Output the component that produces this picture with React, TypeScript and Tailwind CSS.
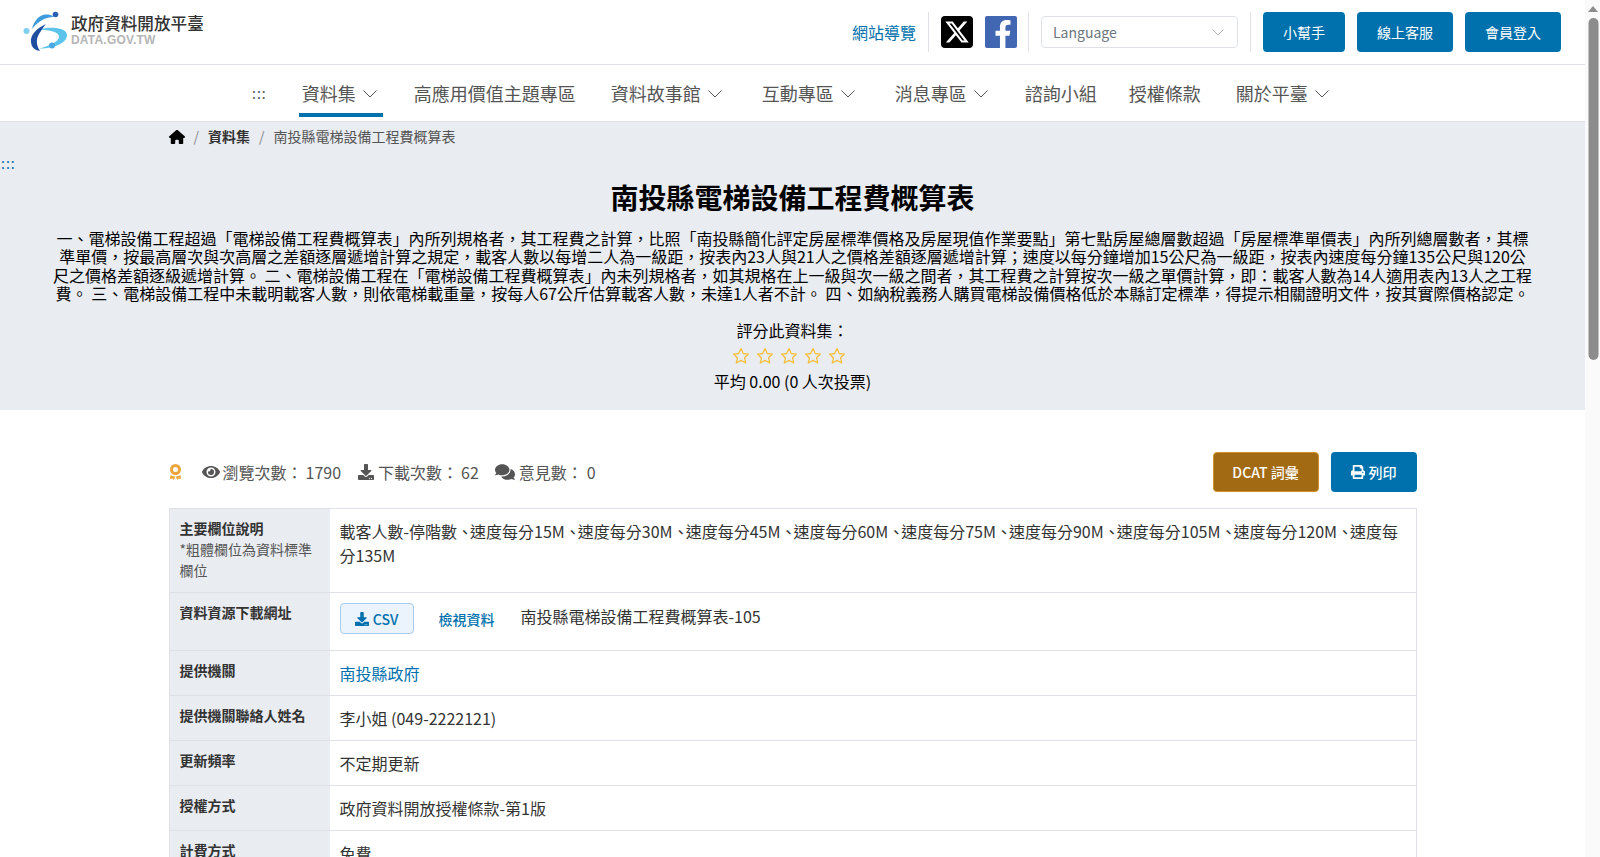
import React from "react";
import { FaEye, FaDownload, FaComments, FaPrint, FaFacebookF } from "react-icons/fa";
import { FaXTwitter, FaHouse } from "react-icons/fa6";

const Chevron = () => (
  <svg width="14" height="8" viewBox="0 0 14 8" fill="none" stroke="#555" strokeWidth="1" className="ml-[7px] mr-[1px]">
    <path d="M0.5 0.5L7 7L13.5 0.5" />
  </svg>
);

const Logo = () => (
  <svg width="44" height="40" viewBox="0 0 44 40" className="shrink-0 overflow-visible">
    <path d="M15 17.500C27 14 43 16 43 23C43 32 27 37 15 36.500C24 34.500 35 30 35 24.500C35 20 26 18 15 17.500z" fill="#5cc3ea" />
    <path d="M22 12C13 16 6 23 7 30C7.500 35 10 38 16 39C12 33 12 27 15 22C17 19 19 15.500 22 12z" fill="#1f4ea1" />
    <path d="M8 17C10 9 15 2.500 22 2.500C25 2.500 28 3 30 5C24 4.500 15 8 8 17z" fill="#3b9bdc" />
    <circle cx="31.500" cy="2.500" r="2.800" fill="#2a5fb4" />
    <circle cx="2.500" cy="19" r="3" fill="#7fd0ef" />
    <circle cx="28" cy="33.500" r="3" fill="#4aa8e0" />
  </svg>
);

const Row = ({ label, children }: { label: React.ReactNode; children: React.ReactNode }) => (
  <div className="flex border-t border-[#dee2e6] first:border-t-0">
    <div className="w-[160px] shrink-0 bg-[#e9ecf1] px-[10px] pt-[9px] pb-[11px] text-[14px] leading-[21px] text-[#333]">{label}</div>
    <div className="flex-1 p-[10px] text-[16px] leading-[24px] text-[#333]">{children}</div>
  </div>
);

const NavItem = ({ text, chevron, active, cls }: { text: string; chevron?: boolean; active?: boolean; cls: string }) => (
  <div className={`relative flex h-[56px] items-center pt-[1px] text-[18px] text-[#555] ${cls}`}>
    {text}
    {chevron && <Chevron />}
    {active && <span className="absolute bottom-[4px] left-[-3px] right-[-5px] h-[4px] bg-[#0071ad]" />}
  </div>
);

const Divider = ({ cls = "mx-[12px]" }: { cls?: string }) => <span className={`h-[40px] w-px bg-[#dee2e6] ${cls}`} />;

const Scrollbar = () => (
  <div className="flex h-full w-[15px] shrink-0 flex-col items-center bg-[#fafafa]">
    <svg width="10" height="6" viewBox="0 0 10 6" className="mt-[6px]"><path d="M5 0L10 6H0z" fill="#8c8c8c" /></svg>
    <div className="mt-[6px] h-[342px] w-[10px] translate-x-[0.5px] rounded-[5px] bg-[#8c8c8c]" />
  </div>
);

const fields = ["載客人數-停階數", "速度每分15M", "速度每分30M", "速度每分45M", "速度每分60M", "速度每分75M", "速度每分90M", "速度每分105M", "速度每分120M", "速度每分135M"];

export default function App() {
  return (
    <div
      className="flex h-screen overflow-hidden bg-white text-[#333]"
      style={{ fontFamily: '"Noto Sans CJK TC", "Noto Sans", sans-serif' }}
    >
      <div className="min-w-0 flex-1 overflow-hidden">
        <header className="flex h-[65px] items-center justify-between border-b border-[#dee2e6] pl-[24px] pr-[24px]">
          <div className="flex items-center">
            <Logo />
            <div className="mb-[4px] ml-[3px] flex flex-col">
              <span className="text-[16.6px] leading-[20px] font-medium text-[#333]">政府資料開放平臺</span>
              <span className="text-[12px] leading-[14px] font-bold tracking-[0.2px] text-[#b5b5b5]" style={{ fontFamily: '"Liberation Sans", sans-serif' }}>DATA.GOV.TW</span>
            </div>
          </div>
          <div className="flex h-[40px] items-center">
            <a className="text-[16px] text-[#0071ad]">網站導覽</a>
            <Divider />
            <span className="flex h-[32px] w-[32px] items-center justify-center rounded-[4px] bg-black text-white"><FaXTwitter size={26} /></span>
            <span className="ml-[12px] flex h-[32px] w-[32px] items-end justify-center overflow-hidden rounded-[2px] bg-[#4267b2] text-white"><FaFacebookF size={28} className="translate-x-[2px]" /></span>
            <Divider cls="ml-[11px] mr-[12px]" />
            <div className="flex h-[32px] w-[197px] items-center justify-between rounded-[4px] border border-[#dee2e6] pl-[11px] pr-[13px] text-[14px] text-[#6c757d]">
              Language
              <svg width="12" height="7" viewBox="0 0 12 7" fill="none" stroke="#bbb" strokeWidth="1"><path d="M0.5 0.5L6 6L11.5 0.5" /></svg>
            </div>
            <Divider />
            <button className="h-[40px] w-[82px] rounded-[4px] bg-[#0071ad] text-[14px] text-white">小幫手</button>
            <button className="ml-[12px] h-[40px] w-[96px] rounded-[4px] bg-[#0071ad] text-[14px] text-white">線上客服</button>
            <button className="ml-[12px] h-[40px] w-[96px] rounded-[4px] bg-[#0071ad] text-[14px] text-white">會員登入</button>
          </div>
        </header>

        <nav className="flex h-[57px] items-center border-b border-[#dee2e6] pl-[252px]">
          <span className="mr-[35px] text-[14px] tracking-[1px] text-[#555]">:::</span>
          <NavItem text="資料集" chevron active cls="mr-[36px]" />
          <NavItem text="高應用價值主題專區" cls="mr-[35px]" />
          <NavItem text="資料故事館" chevron cls="mr-[39px]" />
          <NavItem text="互動專區" chevron cls="mr-[39px]" />
          <NavItem text="消息專區" chevron cls="mr-[36px]" />
          <NavItem text="諮詢小組" cls="mr-[32px]" />
          <NavItem text="授權條款" cls="mr-[35px]" />
          <NavItem text="關於平臺" chevron cls="" />
        </nav>

        <section className="h-[288px] bg-[#e9ecf1]">
          <div className="mx-auto flex h-[29px] w-[1248px] items-center text-[14px]">
            <FaHouse size={16} className="text-black" />
            <span className="mx-[9px] text-[#888]">/</span>
            <span className="font-bold text-[#333]">資料集</span>
            <span className="mx-[9px] text-[#888]">/</span>
            <span className="text-[#555]">南投縣電梯設備工程費概算表</span>
          </div>
          <div className="mt-[5px] pl-[1px] text-[14px] leading-[14px] tracking-[1px] text-[#0071ad]">:::</div>
          <h1 className="mt-[8px] text-center text-[28px] leading-[38px] font-bold text-black">南投縣電梯設備工程費概算表</h1>
          <p className="mx-auto mt-[13px] w-[1480px] text-center text-[16px] leading-[18.4px] text-black">
            一、電梯設備工程超過「電梯設備工程費概算表」內所列規格者，其工程費之計算，比照「南投縣簡化評定房屋標準價格及房屋現值作業要點」第七點房屋總層數超過「房屋標準單價表」內所列總層數者，其標準單價，按最高層次與次高層之差額逐層遞增計算之規定，載客人數以每增二人為一級距，按表內23人與21人之價格差額逐層遞增計算；速度以每分鐘增加15公尺為一級距，按表內速度每分鐘135公尺與120公尺之價格差額逐級遞增計算。 二、電梯設備工程在「電梯設備工程費概算表」內未列規格者，如其規格在上一級與次一級之間者，其工程費之計算按次一級之單價計算，即：載客人數為14人適用表內13人之工程費。 三、電梯設備工程中未載明載客人數，則依電梯載重量，按每人67公斤估算載客人數，未達1人者不計。 四、如納稅義務人購買電梯設備價格低於本縣訂定標準，得提示相關證明文件，按其實際價格認定。
          </p>
          <div className="mt-[15px] text-center text-[16px] leading-[24px] text-black">評分此資料集：</div>
          <div className="flex justify-center gap-[6px] pr-[8px] pt-[5px]">
            {[0, 1, 2, 3, 4].map((i) => (
              <svg key={i} width="18" height="18" viewBox="0 0 18 18" fill="none" stroke="#f6bf3f" strokeWidth="1.300">
                <path d="M9 1.500l2.300 5 5.200.600-3.900 3.600 1.100 5.300L9 13.400l-4.700 2.600 1.100-5.300-3.900-3.600 5.200-.600z" strokeLinejoin="round" />
              </svg>
            ))}
          </div>
          <div className="mt-[4px] text-center text-[16px] leading-[24px] text-black">平均 0.00 (0 人次投票)</div>
        </section>

        <main className="mx-auto w-[1248px]">
          <div className="flex items-center justify-between pt-[42px] pb-[16px] text-[16px] text-[#555]">
            <div className="flex items-center">
              <svg width="13" height="17" viewBox="0 0 13 17" fill="#eda43b">
                <path fillRule="evenodd" d="M6.500 0a5.500 5.500 0 110 11 5.500 5.500 0 010-11zm0 3a2.500 2.500 0 100 5 2.500 2.500 0 000-5z" />
                <path d="M1.500 11l2.500 1.300 2.500.200L4.500 16l-1-1.500-2.500.5zM11.500 11L9 12.300l-2.500.200L8.500 16l1-1.500 2.500.5z" />
              </svg>
              <FaEye size={18} className="ml-[20px] text-[#555]" />
              <span className="ml-[3px]">瀏覽次數：</span>
              <span className="ml-[3px]">1790</span>
              <FaDownload size={16} className="ml-[17px] text-[#555]" />
              <span className="ml-[4px]">下載次數：</span>
              <span className="ml-[3px]">62</span>
              <FaComments size={20} className="ml-[16px] text-[#555]" />
              <span className="ml-[4px]">意見數：</span>
              <span className="ml-[4px]">0</span>
            </div>
            <div className="flex items-center">
              <button className="h-[40px] w-[106px] rounded-[4px] border border-[#d18f2a] bg-[#a36a14] text-[14px] font-medium text-white">DCAT 詞彙</button>
              <button className="ml-[12px] flex h-[40px] w-[86px] items-center justify-center gap-[4px] rounded-[4px] bg-[#0071ad] text-[14px] font-medium text-white"><FaPrint size={14} />列印</button>
            </div>
          </div>

          <div className="border border-[#dee2e6]">
            <Row label={<><div className="font-bold">主要欄位說明</div><div className="text-[#555]">*粗體欄位為資料標準欄位</div></>}>
              {fields.map((f, i) => (
                <React.Fragment key={f}>
                  {i > 0 && <span className="tracking-[-3px]">、</span>}
                  {f}
                </React.Fragment>
              ))}
            </Row>
            <Row label={<div className="font-bold">資料資源下載網址</div>}>
              <div className="flex h-[37px] items-start">
                <span className="flex h-[31px] w-[74px] items-center justify-center gap-[4px] rounded-[4px] border border-[#a6cdf0] bg-[#ebf3fd] text-[14px] font-medium text-[#0071ad]"><FaDownload size={14} />CSV</span>
                <span className="ml-[25px] mt-[4px] text-[14px] leading-[24px] font-medium text-[#0071ad]">檢視資料</span>
                <span className="ml-[26px] mt-[1px]">南投縣電梯設備工程費概算表-105</span>
              </div>
            </Row>
            <Row label={<div className="font-bold">提供機關</div>}><span className="text-[#0071ad]">南投縣政府</span></Row>
            <Row label={<div className="font-bold">提供機關聯絡人姓名</div>}>李小姐 (049-2222121)</Row>
            <Row label={<div className="font-bold">更新頻率</div>}>不定期更新</Row>
            <Row label={<div className="font-bold">授權方式</div>}>政府資料開放授權條款-第1版</Row>
            <Row label={<div className="font-bold">計費方式</div>}>免費</Row>
          </div>
        </main>
      </div>
      <Scrollbar />
    </div>
  );
}
